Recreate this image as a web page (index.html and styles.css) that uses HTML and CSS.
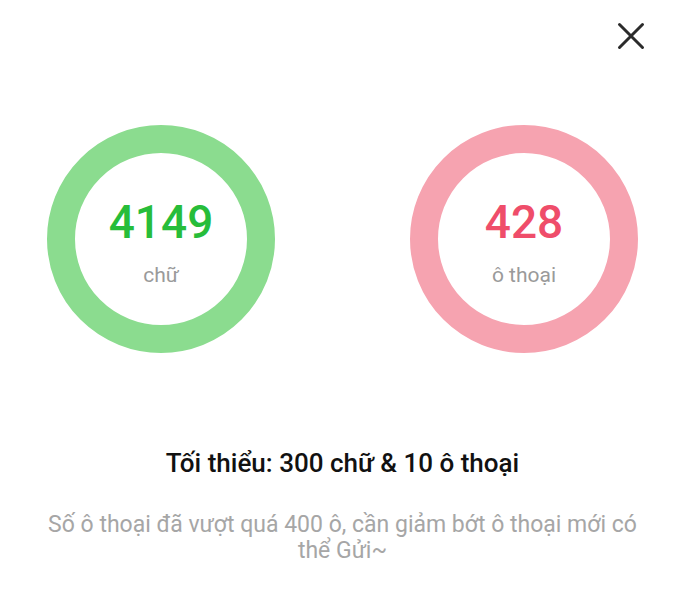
FILE: index.html
```html
<!DOCTYPE html>
<html lang="vi">
<head>
<meta charset="UTF-8">
<title>Kiểm tra trước khi gửi</title>
<link rel="stylesheet" href="styles.css">
</head>
<body>

<div class="sheet">
  <div class="header">
    <button class="close" aria-label="Đóng">
      <svg width="28" height="28" viewBox="0 0 28 28">
        <path d="M2.5 2.5 L25.5 25.5 M25.5 2.5 L2.5 25.5" stroke="#2b2b2b" stroke-width="3" stroke-linecap="round" fill="none"/>
      </svg>
    </button>
  </div>

  <div class="stats">
    <div class="ring ring-ok">
      <div class="count">4149</div>
      <div class="unit">chữ</div>
    </div>
    <div class="ring ring-over">
      <div class="count">428</div>
      <div class="unit">ô thoại</div>
    </div>
  </div>

  <h2 class="rule">Tối thiểu: 300 chữ &amp; 10 ô thoại</h2>
  <p class="hint">Số ô thoại đã vượt quá 400 ô, cần giảm bớt ô thoại mới có thể Gửi~</p>
</div>

</body>
</html>
```

FILE: styles.css
```css
body {
  margin: 0;
  background-color: #fff;
  font-family: Roboto, "Noto Sans", Arial, sans-serif;
  color: #111;
}

.sheet {
  background-color: #fff;
}

.header {
  display: flex;
  justify-content: flex-end;
  padding: 22px 40px 0 0;
}

.close {
  display: flex;
  padding: 0;
  border: none;
  background: none;
  cursor: pointer;
}

.stats {
  display: flex;
  justify-content: space-between;
  padding: 0 47px;
  margin-top: 75px;
}

.ring {
  width: 228px;
  height: 228px;
  box-sizing: border-box;
  border: 28px solid;
  border-radius: 50%;
  display: flex;
  flex-direction: column;
  align-items: center;
  justify-content: center;
  padding-top: 6px;
}

.ring-ok {
  border-color: #8bdc8f;
  color: #27bd3a;
}

.ring-over {
  border-color: #f6a3b0;
  color: #ef4d6a;
}

.count {
  font-size: 46px;
  font-weight: 500;
  line-height: 1;
}

.unit {
  font-size: 21px;
  line-height: 1;
  color: #9a9a9a;
  margin-top: 20px;
}

.rule {
  margin: 95px 0 0;
  text-align: center;
  font-size: 26px;
  font-weight: 500;
  line-height: 30px;
  color: #111;
}

.hint {
  margin: 34px 0 0;
  padding: 0 45px;
  text-align: center;
  font-size: 23px;
  line-height: 26px;
  color: #a6a6a6;
}
```
